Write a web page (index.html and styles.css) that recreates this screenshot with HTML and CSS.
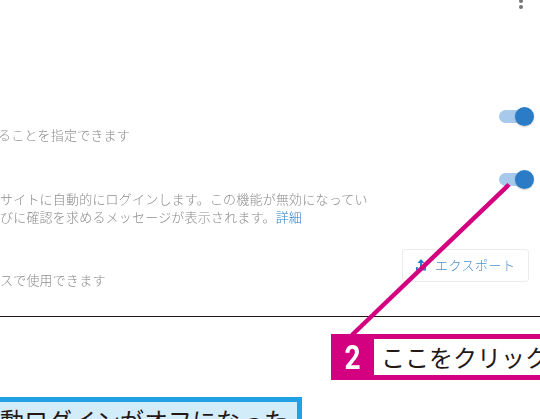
FILE: index.html
```html
<!DOCTYPE html>
<html lang="ja">
<head>
<meta charset="utf-8">
<title>設定</title>
<link rel="stylesheet" href="styles.css">
</head>
<body>
<main class="page">
  <section class="settings">
    <div class="topbar">
      <span class="kebab"><i></i><i></i></span>
    </div>
    <div class="row row-one">
      <p class="desc first-desc">ることを指定できます</p>
      <span class="toggle"><span class="thumb"></span></span>
    </div>
    <div class="row row-two">
      <p class="desc">サイトに自動的にログインします。この機能が無効になってい<br>びに確認を求めるメッセージが表示されます。<a class="link">詳細</a></p>
      <span class="toggle"><span class="thumb"></span></span>
    </div>
    <div class="row row-three">
      <p class="desc third-desc">スで使用できます</p>
      <button class="export">
        <svg class="export-icon" viewBox="0 0 14 14" width="14" height="14"><path d="M7 1 3.500 5H6v4h2V5h2.500zM2 9v3.500h10V9h-1.800v1.700H3.800V9z"/></svg>
        <span>エクスポート</span>
      </button>
    </div>
  </section>
  <div class="note"><span class="note-text">自動ログインがオフになった</span></div>
  <svg class="leader" viewBox="0 0 540 419" width="540" height="419"><line x1="509" y1="184.500" x2="352" y2="335"/></svg>
  <div class="callout"><span class="num">2</span><span class="label">ここをクリック</span></div>
</main>
</body>
</html>
```
FILE: styles.css
```css
html, body {
  margin: 0;
  padding: 0;
  background: #fff;
}
.page {
  position: relative;
  width: 540px;
  height: 419px;
  overflow: hidden;
  font-family: "Noto Sans CJK JP", "Noto Sans", sans-serif;
}
.settings {
  height: 316px;
  border-bottom: 1px solid #231815;
}
.topbar {
  height: 107px;
  display: flex;
  justify-content: flex-end;
  align-items: flex-start;
  padding-right: 17px;
  filter: blur(0.3px);
}
.kebab {
  display: flex;
  flex-direction: column;
  gap: 2px;
  margin-top: -1px;
}
.kebab i {
  display: block;
  width: 4px;
  height: 4px;
  border-radius: 50%;
  background: #777;
}
.row {
  display: flex;
  justify-content: space-between;
  align-items: flex-start;
  padding-right: 7px;
  filter: blur(0.3px);
}
.row-one { height: 63px; }
.row-two { height: 79px; }
.row-three { padding-right: 11px; }
.desc {
  margin: 20px 0 0;
  font-size: 13px;
  font-weight: 300;
  line-height: 18px;
  letter-spacing: 0.2px;
  color: #8c8c8c;
  white-space: nowrap;
}
.first-desc { margin: 19px 0 0 -2px; }
.third-desc { margin-top: 22px; }
.link { color: #2a7fc9; }
.toggle {
  position: relative;
  display: block;
  width: 34px;
  height: 13px;
  margin-top: 3px;
  border-radius: 7px;
  background: #a6c9ec;
}
.thumb {
  position: absolute;
  right: -1px;
  top: -3px;
  width: 19px;
  height: 19px;
  border-radius: 50%;
  background: #2b7cc7;
  box-shadow: 0 1px 2px rgba(0,0,0,.2);
}
.export {
  display: flex;
  align-items: center;
  gap: 7px;
  width: 127px;
  height: 33px;
  padding: 0 0 2px 11px;
  border: 1px solid #ececec;
  border-radius: 3px;
  background: #fff;
  color: #4a90d0;
  font: inherit;
  font-size: 13px;
  font-weight: 300;
  letter-spacing: 0.5px;
}
.export-icon { fill: #2b7cc7; flex: none; }
.note {
  width: 297px;
  height: 40px;
  margin-top: 80px;
  border: 5px solid #22a0e6;
  border-left: 0;
  background: #d3ecfa;
  overflow: hidden;
  color: #231815;
  font-size: 24px;
  line-height: 35px;
  white-space: nowrap;
}
.note-text {
  display: block;
  margin-left: -24px;
}
.leader {
  position: absolute;
  left: 0;
  top: 0;
  pointer-events: none;
}
.leader line {
  stroke: #d3007f;
  stroke-width: 4.5;
}
.callout {
  position: absolute;
  left: 331px;
  top: 334px;
  width: 240px;
  height: 46px;
  display: flex;
  background: #d3007f;
  padding: 5px 0;
  box-sizing: border-box;
}
.num {
  width: 43px;
  text-align: center;
  color: #fff;
  font-family: "Roboto", sans-serif;
  font-weight: 700;
  font-size: 33px;
  line-height: 38px;
  transform: scaleX(0.85);
}
.label {
  flex: 1;
  padding-left: 7px;
  background: #fff;
  color: #231815;
  font-size: 24px;
  line-height: 36px;
  white-space: nowrap;
}
```
